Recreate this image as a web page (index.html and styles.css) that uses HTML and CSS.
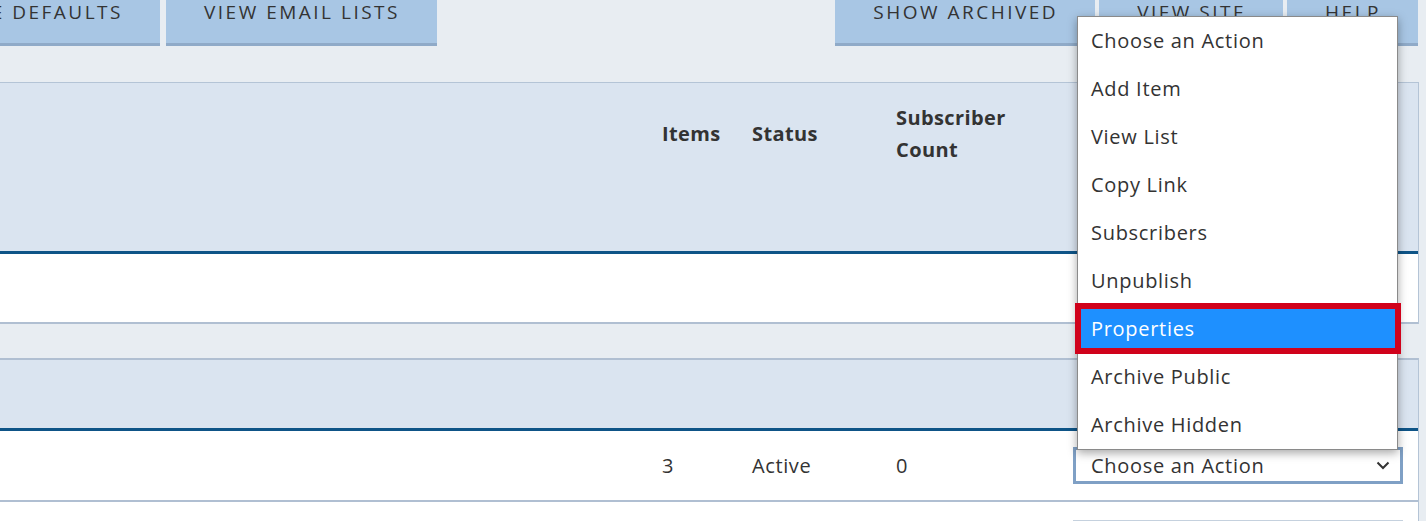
FILE: index.html
```html
<!DOCTYPE html>
<html lang="en">
<head>
<meta charset="utf-8">
<title>Email Lists</title>
<link rel="stylesheet" href="styles.css">
</head>
<body>
<nav class="nav">
  <div class="nav-left">
    <a class="btn">Site Defaults</a>
    <a class="btn">View Email Lists</a>
  </div>
  <div class="nav-right">
    <a class="btn">Show Archived</a>
    <a class="btn">View Site</a>
    <a class="btn">Help</a>
  </div>
</nav>

<main class="lists">
  <section class="panel panel-first">
    <div class="grid head head-tall">
      <div></div>
      <div class="th">Items</div>
      <div class="th">Status</div>
      <div class="th">Subscriber<br>Count</div>
      <div></div>
    </div>
    <div class="grid row row-empty"></div>
  </section>

  <section class="panel panel-second">
    <div class="grid head head-short"></div>
    <div class="grid row">
      <div></div>
      <div class="td">3</div>
      <div class="td">Active</div>
      <div class="td">0</div>
      <div class="cell-action">
        <div class="select select-focus">
          <span>Choose an Action</span>
          <svg class="chev" width="14" height="9" viewBox="0 0 14 9"><path d="M1.5 1.5 L7 7 L12.5 1.5" fill="none" stroke="#333" stroke-width="2"/></svg>
        </div>
      </div>
    </div>
    <div class="grid row row-next">
      <div></div><div></div><div></div><div></div>
      <div class="cell-action">
        <div class="select"></div>
      </div>
    </div>
  </section>
</main>

<ul class="menu">
  <li>Choose an Action</li>
  <li>Add Item</li>
  <li>View List</li>
  <li>Copy Link</li>
  <li>Subscribers</li>
  <li>Unpublish</li>
  <li class="active">Properties</li>
  <li>Archive Public</li>
  <li>Archive Hidden</li>
</ul>
</body>
</html>
```

FILE: styles.css
```css
html, body {
  margin: 0;
  padding: 0;
}
body {
  background: #e8edf2;
  font-family: "Open Sans", "DejaVu Sans", sans-serif;
  color: #333;
  overflow: hidden;
  height: 521px;
}

.nav {
  display: flex;
  justify-content: space-between;
  height: 46px;
  padding-right: 8px;
}
.nav-left {
  width: 437px;
  display: flex;
  justify-content: flex-end;
  gap: 6px;
}
.nav-right {
  display: flex;
  gap: 4px;
}
.btn {
  display: block;
  white-space: nowrap;
  background: #a8c6e4;
  border-bottom: 3px solid #8faac8;
  height: 43px;
  padding: 0 37px 0 38px;
  box-sizing: content-box;
  font-size: 19px;
  line-height: 25px;
  letter-spacing: 2.5px;
  text-transform: uppercase;
  color: #333;
}

.lists {
  margin-top: 36px;
}
.panel {
  margin-left: -20px;
  margin-right: 7px;
  border-right: 1px solid #b4c4d6;
}
.panel-first {
  border-top: 1px solid #b4c4d6;
}
.panel-second {
  margin-top: 34px;
  border-top: 2px solid #b0bfd2;
}

.grid {
  display: grid;
  grid-template-columns: 1fr 90px 144px 177px 345px;
  box-sizing: border-box;
}
.head {
  background: #dae4f0;
  border-bottom: 3px solid #0e5487;
  align-items: center;
  align-content: start;
}
.head-tall {
  height: 171px;
  padding-top: 19px;
}
.head-short {
  height: 71px;
}
.th {
  font-weight: 700;
  font-size: 20px;
  line-height: 32px;
  letter-spacing: 0.4px;
}
.row {
  background: #fff;
  border-bottom: 2px solid #b0bfd2;
  height: 71px;
  align-items: center;
}
.row-empty {
  height: 70px;
}
.row-next {
  height: 19px;
  border-bottom: 0;
  align-items: start;
  padding-top: 18px;
}
.td {
  font-size: 20px;
  line-height: 32px;
  letter-spacing: 0.6px;
}
.cell-action {
  display: flex;
}
.select {
  width: 330px;
  height: 37px;
  box-sizing: border-box;
  border: 1px solid #c5d1de;
  background: #fff;
  display: flex;
  align-items: center;
  justify-content: space-between;
  padding: 0 10px 0 17px;
  font-size: 20px;
  letter-spacing: 0.7px;
}
.select-focus {
  border: 3px solid #7fa0c5;
  padding-left: 15px;
}

.menu {
  position: absolute;
  left: 1077px;
  top: 16px;
  width: 321px;
  box-sizing: border-box;
  margin: 0;
  padding: 0;
  list-style: none;
  background: #fff;
  border: 1px solid #8a8a8a;
  box-shadow: 0 3px 9px rgba(0, 0, 0, 0.35);
}
.menu li {
  height: 48px;
  line-height: 48px;
  padding-left: 13px;
  font-size: 20px;
  letter-spacing: 0.7px;
  color: #333;
}
.menu li.active {
  position: relative;
  background: #1e90ff;
  color: #fff;
}
.menu li.active::after {
  content: "";
  position: absolute;
  left: -3px;
  top: -2px;
  right: -4px;
  bottom: -1px;
  border: 6px solid #d0021b;
}
```
